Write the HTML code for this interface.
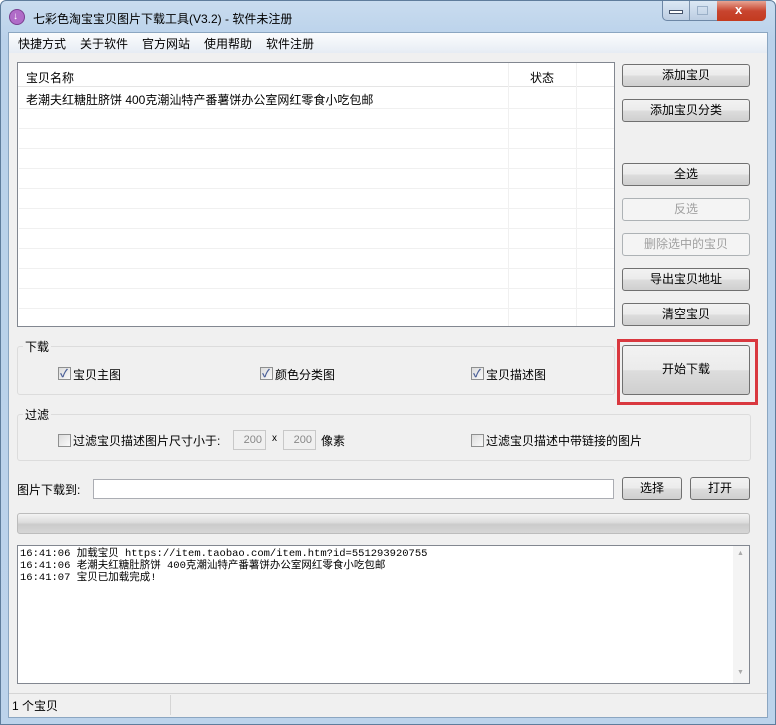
<!DOCTYPE html>
<html><head><meta charset="utf-8"><style>
*{box-sizing:border-box;margin:0;padding:0}
body{width:776px;height:725px;overflow:hidden;background:#fff;font-family:"Liberation Sans","Noto Sans CJK SC",sans-serif;font-size:12px;color:#000;position:relative}
.a{position:absolute}
.frame{left:0;top:0;width:776px;height:725px;background:linear-gradient(#c9dcef,#b9d1ea 40px,#bcd3eb);border:1px solid #5f7d9c;border-radius:6px 6px 0 0}
.client{left:8px;top:32px;width:760px;height:686px;background:#f0f0f0;border:1px solid #8ba6c1}
.menu{left:9px;top:33px;width:758px;height:20px;background:linear-gradient(#fbfcfd,#e6ecf4)}
.btn{position:absolute;border:1px solid #707070;border-radius:3px;background:linear-gradient(#f2f2f2 0,#ebebeb 50%,#dddddd 51%,#cfcfcf 100%);text-align:center;font-size:12px;line-height:20px}
.dis{border-color:#adb2b5;background:#f4f4f4;color:#a0a0a0}
.grp{position:absolute;border:1px solid #dcdcdc;border-radius:3px}
.lbl{position:absolute;background:#f0f0f0;padding:0 2px;font-size:12px}
.cb{position:absolute;width:13px;height:13px;border:1px solid #8e8f8f;background:linear-gradient(135deg,#dcdcdc,#fafafa)}
.cb.on::after{content:"✓";position:absolute;left:1px;top:-3px;font-size:11px;color:#4a5f97;font-weight:bold}
.t{position:absolute;white-space:nowrap}
.row{position:absolute;left:1px;width:595px;height:1px;background:#f0f0f0}
</style></head><body>
<div class="a frame"></div>
<div class="a" style="left:9px;top:9px;width:16px;height:16px;border-radius:50%;background:#b06bc8;border:1px solid #7a3f90"></div>
<div class="a" style="left:13px;top:11px;color:#fff;font-size:10px">↓</div>
<div class="t" style="left:33px;top:10px;font-size:12px">七彩色淘宝宝贝图片下载工具(V3.2) - 软件未注册</div>
<div class="a" style="left:662px;top:1px;width:104px;height:20px;border:1px solid #6d87a6;border-top:none;border-radius:0 0 5px 5px;background:linear-gradient(#dce8f4,#bccde2)"></div>
<div class="a" style="left:689px;top:1px;width:1px;height:19px;background:#7d93ad"></div>
<div class="a" style="left:717px;top:1px;width:49px;height:20px;border-radius:0 0 5px 0;background:linear-gradient(#e7a493,#c8452f 50%,#c33a1f)"></div>
<div class="a" style="left:669px;top:10px;width:14px;height:4px;border:1px solid #45536a;background:#fff"></div>
<div class="a" style="left:697px;top:6px;width:11px;height:9px;border:1px solid #9bb0c8"></div>
<div class="t" style="left:735px;top:2px;color:#fff;font-weight:bold;font-size:13px">x</div>
<div class="a client"></div>
<div class="a menu"></div>
<div class="t" style="left:18px;top:35px">快捷方式</div>
<div class="t" style="left:80px;top:35px">关于软件</div>
<div class="t" style="left:142px;top:35px">官方网站</div>
<div class="t" style="left:204px;top:35px">使用帮助</div>
<div class="t" style="left:266px;top:35px">软件注册</div>

<div class="a" style="left:17px;top:62px;width:598px;height:265px;background:#fff;border:1px solid #828790">
 <div class="a" style="left:0;top:0;width:596px;height:24px;border-bottom:1px solid #e5e5e5"></div>
 <div class="a" style="left:490px;top:0;width:1px;height:263px;background:#f0f0f0"></div>
 <div class="a" style="left:558px;top:0;width:1px;height:263px;background:#f0f0f0"></div>
 <div class="t" style="left:8px;top:6px">宝贝名称</div>
 <div class="t" style="left:512px;top:6px">状态</div>
 <div class="t" style="left:8px;top:28px">老潮夫红糖肚脐饼 400克潮汕特产番薯饼办公室网红零食小吃包邮</div>
 <div class="row" style="top:45px"></div><div class="row" style="top:65px"></div><div class="row" style="top:85px"></div><div class="row" style="top:105px"></div><div class="row" style="top:125px"></div><div class="row" style="top:145px"></div><div class="row" style="top:165px"></div><div class="row" style="top:185px"></div><div class="row" style="top:205px"></div><div class="row" style="top:225px"></div><div class="row" style="top:245px"></div>
</div>

<div class="btn" style="left:622px;top:64px;width:128px;height:23px">添加宝贝</div>
<div class="btn" style="left:622px;top:99px;width:128px;height:23px">添加宝贝分类</div>
<div class="btn" style="left:622px;top:163px;width:128px;height:23px">全选</div>
<div class="btn dis" style="left:622px;top:198px;width:128px;height:23px">反选</div>
<div class="btn dis" style="left:622px;top:233px;width:128px;height:23px">删除选中的宝贝</div>
<div class="btn" style="left:622px;top:268px;width:128px;height:23px">导出宝贝地址</div>
<div class="btn" style="left:622px;top:303px;width:128px;height:23px">清空宝贝</div>

<div class="grp" style="left:17px;top:346px;width:598px;height:49px"></div>
<div class="lbl" style="left:23px;top:338px">下载</div>
<div class="cb on" style="left:58px;top:367px"></div><div class="t" style="left:73px;top:366px">宝贝主图</div>
<div class="cb on" style="left:260px;top:367px"></div><div class="t" style="left:275px;top:366px">颜色分类图</div>
<div class="cb on" style="left:471px;top:367px"></div><div class="t" style="left:486px;top:366px">宝贝描述图</div>

<div class="a" style="left:617px;top:339px;width:141px;height:66px;border:3px solid #d9383f"></div>
<div class="btn" style="left:622px;top:345px;width:128px;height:50px;line-height:46px">开始下载</div>

<div class="grp" style="left:17px;top:414px;width:734px;height:47px"></div>
<div class="lbl" style="left:23px;top:406px">过滤</div>
<div class="cb" style="left:58px;top:434px"></div><div class="t" style="left:73px;top:432px">过滤宝贝描述图片尺寸小于:</div>
<div class="a" style="left:233px;top:430px;width:33px;height:20px;border:1px solid #c8c8c8;background:#f0f0f0;color:#888;font-size:11px;text-align:right;padding:3px 3px 0 0">200</div>
<div class="t" style="left:272px;top:433px;font-size:10px">x</div>
<div class="a" style="left:283px;top:430px;width:33px;height:20px;border:1px solid #c8c8c8;background:#f0f0f0;color:#888;font-size:11px;text-align:right;padding:3px 3px 0 0">200</div>
<div class="t" style="left:321px;top:432px">像素</div>
<div class="cb" style="left:471px;top:434px"></div><div class="t" style="left:486px;top:432px">过滤宝贝描述中带链接的图片</div>

<div class="t" style="left:17px;top:481px">图片下载到:</div>
<div class="a" style="left:93px;top:479px;width:521px;height:20px;background:#fff;border:1px solid #abadb3"></div>
<div class="btn" style="left:622px;top:477px;width:60px;height:23px">选择</div>
<div class="btn" style="left:690px;top:477px;width:60px;height:23px">打开</div>

<div class="a" style="left:17px;top:513px;width:733px;height:21px;border:1px solid #bcbcbc;border-radius:3px;background:linear-gradient(#f3f3f3,#dcdcdc 45%,#cbcbcb 55%,#d6d6d6)"></div>

<div class="a" style="left:17px;top:545px;width:733px;height:139px;background:#fff;border:1px solid #828790">
 <div class="a" style="left:715px;top:0;width:16px;height:137px;background:#f4f4f4"></div>
 <div class="t" style="left:719px;top:4px;font-size:7px;color:#aaa">▲</div>
 <div class="t" style="left:719px;top:123px;font-size:7px;color:#aaa">▼</div>
 <div class="t" style="left:2px;top:2px;font-family:'Liberation Mono','Noto Sans CJK SC',monospace;font-size:10.5px;line-height:12px">16:41:06 加载宝贝 https://item.taobao.com/item.htm?id=551293920755<br>16:41:06 老潮夫红糖肚脐饼 400克潮汕特产番薯饼办公室网红零食小吃包邮<br>16:41:07 宝贝已加载完成!</div>
</div>

<div class="a" style="left:9px;top:693px;width:758px;height:1px;background:#d5d5d5"></div>
<div class="a" style="left:170px;top:695px;width:1px;height:20px;background:#d5d5d5"></div>
<div class="t" style="left:12px;top:697px">1 个宝贝</div>
</body></html>
